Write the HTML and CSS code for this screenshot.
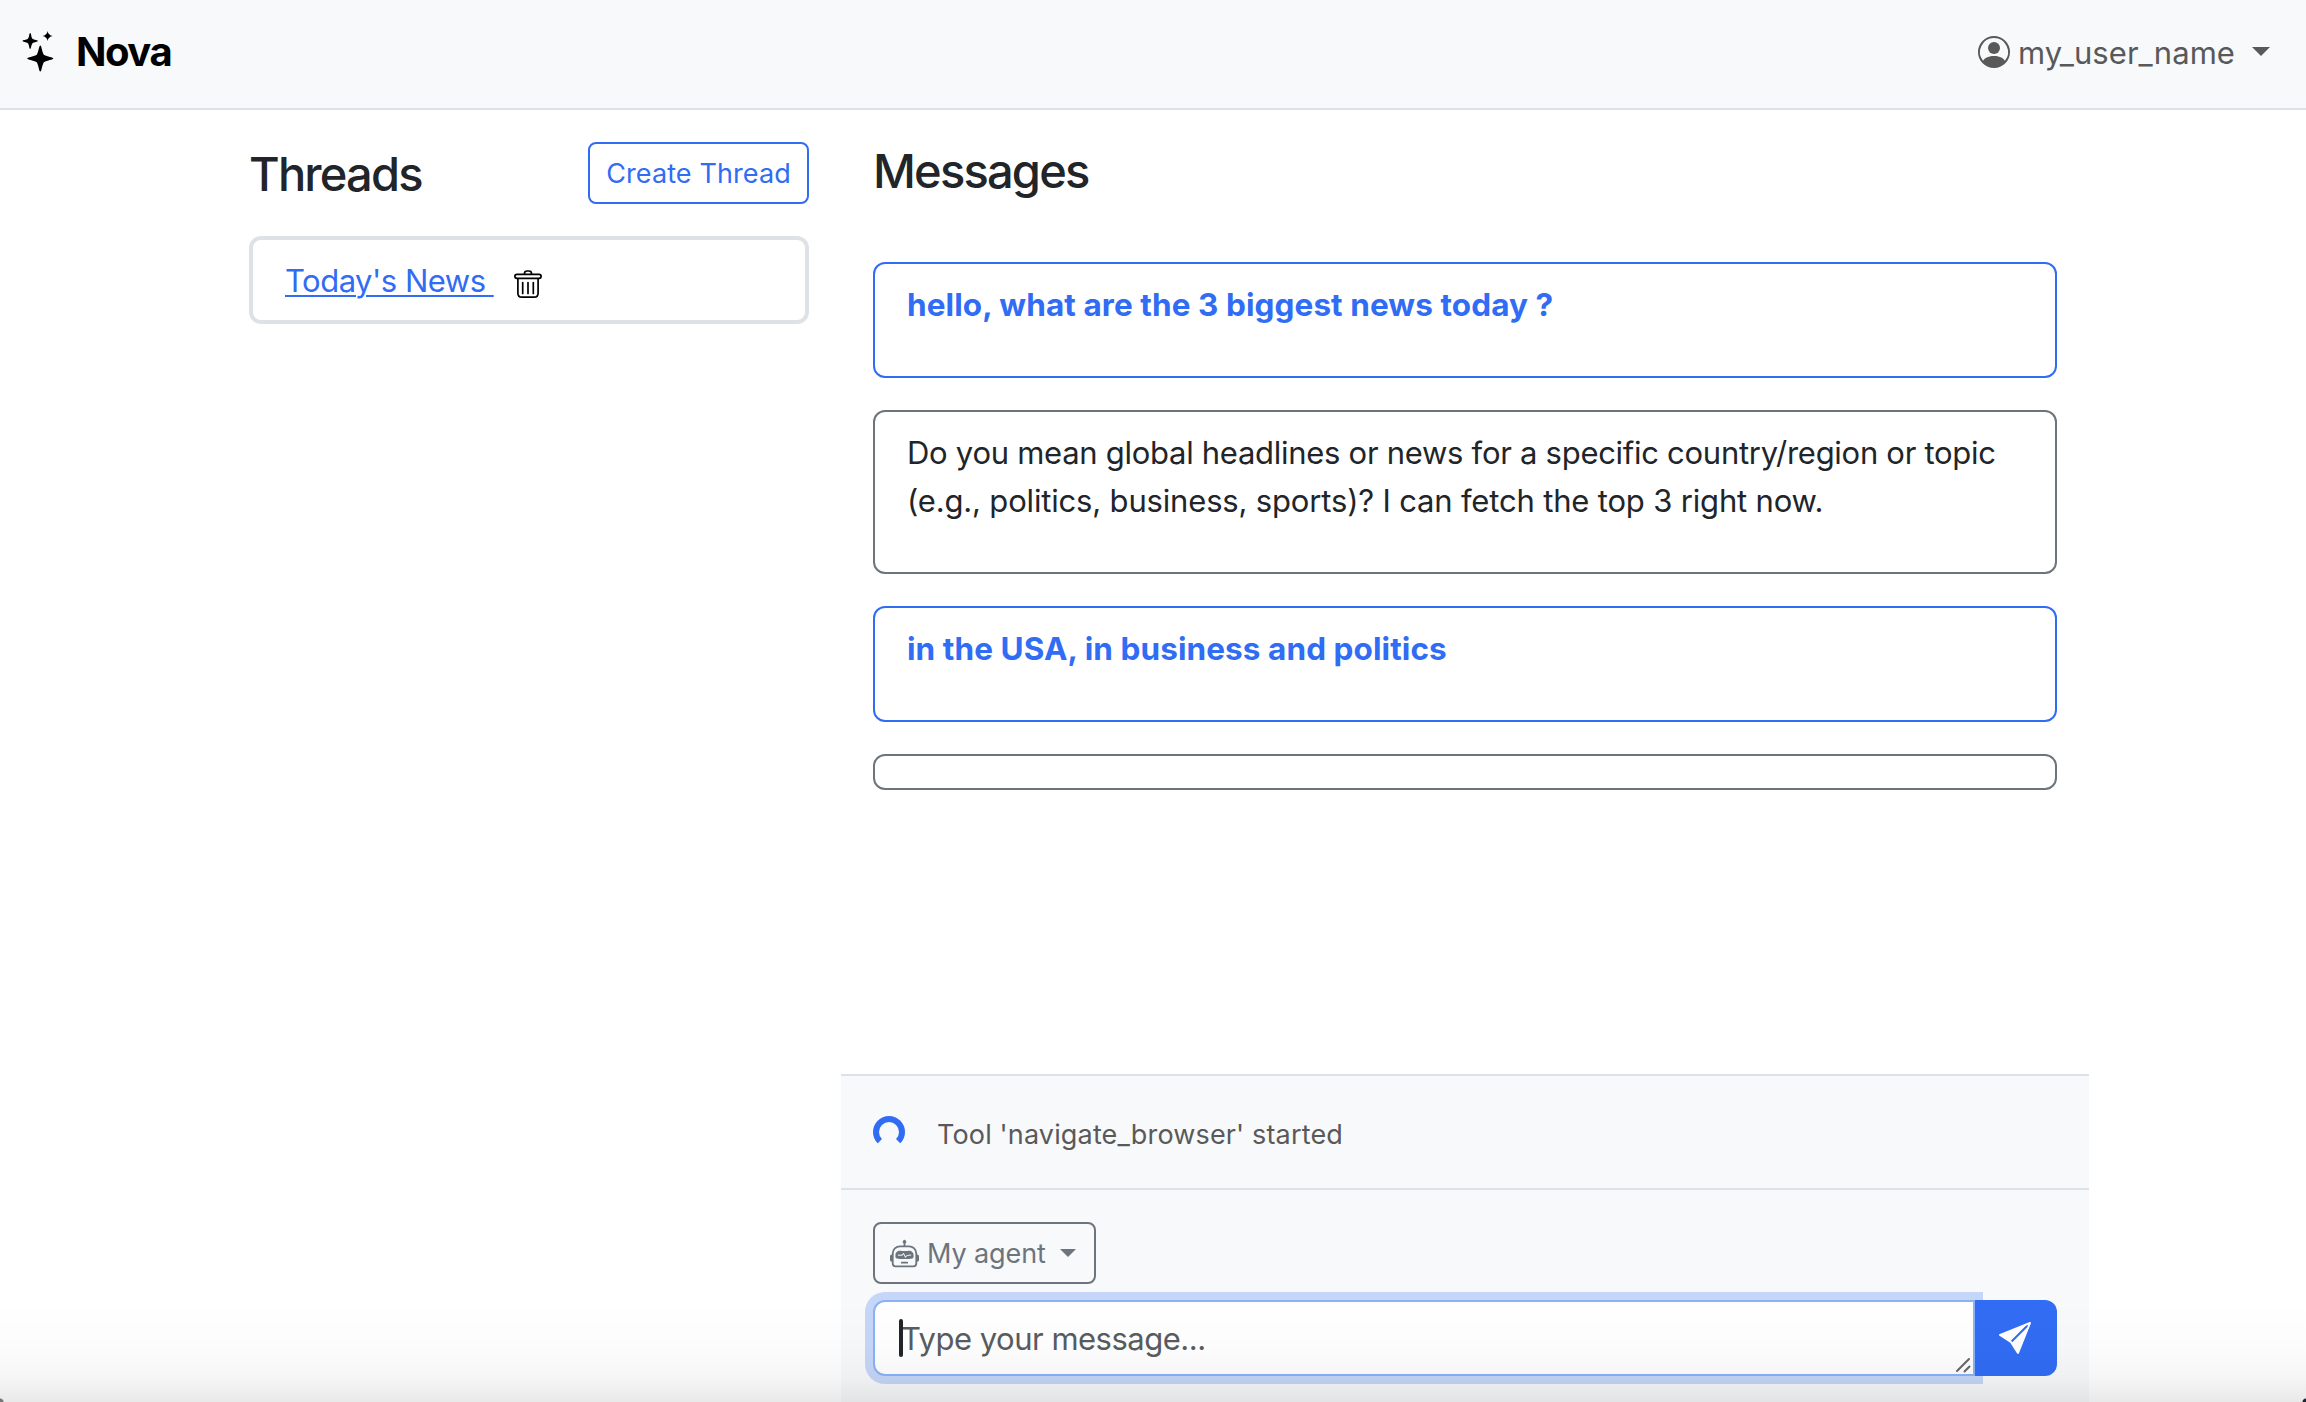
FILE: index.html
```html
<!DOCTYPE html>
<html lang="en">
<head>
<meta charset="utf-8">
<title>Nova</title>
<link rel="stylesheet" href="styles.css">
</head>
<body>
<nav class="navbar">
  <a class="brand">
    <svg class="brand-icon" viewBox="0 0 30 40"><path d="M17.300 14.500C18.600 14.500 18.800 20 20.800 23.800C24.500 26 30.300 26.200 30.300 27.500C30.300 28.800 24.500 29 20.800 31.200C18.800 35 18.600 40.500 17.300 40.500C16 40.500 15.800 35 13.800 31.200C10 29 4.300 28.800 4.300 27.500C4.300 26.200 10 26 13.800 23.800C15.800 20 16 14.500 17.300 14.500ZM7.200 2C8.300 2 8 6 9.500 7.800C11.300 9 14.800 9 14.800 10C14.800 11 11.300 11 9.500 12.200C8 14 8.300 17.800 7.200 17.800C6.100 17.800 6.400 14 4.900 12.200C3.100 11 -.4 11 -.4 10C-.4 9 3.100 9 4.900 7.800C6.400 6 6.100 2 7.200 2ZM24.600 0Q25.200 4.200 29.800 5Q25.200 5.800 24.600 10Q24 5.800 19.400 5Q24 4.200 24.600 0Z"/></svg>
    <span class="brand-name">Nova</span>
  </a>
  <div class="user">
    <svg class="user-icon" viewBox="0 0 16 16"><path d="M11 6a3 3 0 1 1-6 0 3 3 0 0 1 6 0"/><path fill-rule="evenodd" d="M0 8a8 8 0 1 1 16 0A8 8 0 0 1 0 8m8-7a7 7 0 0 0-5.468 11.370C3.242 11.226 4.805 10 8 10s4.757 1.225 5.468 2.370A7 7 0 0 0 8 1"/></svg>
    <span class="user-name">my_user_name</span>
    <span class="caret"></span>
  </div>
</nav>
<div class="container">
  <aside class="threads">
    <header class="threads-head">
      <h2>Threads</h2>
      <button class="btn-create">Create Thread</button>
    </header>
    <div class="thread">
      <a class="thread-link">Today's News </a>
      <svg class="trash" viewBox="0 0 28 32" fill="none" stroke="#000" stroke-width="1.700" stroke-linecap="round"><rect x=".9" y="4.300" width="26.200" height="4" rx="2"/><path d="M10.500 4V3.500Q10.500 1 13 1H15Q17.500 1 17.500 3.500V4M3.900 9V23.200Q3.900 27.200 7.900 27.200H20.100Q24.100 27.200 24.100 23.200V9M8.700 12.500V23.500M14 12.500V23.500M19.300 12.500V23.500"/></svg>
    </div>
  </aside>
  <main class="chat">
    <section class="messages">
      <h2>Messages</h2>
      <article class="card user-card"><span class="line">hello, what are the 3 biggest news today ?</span></article>
      <article class="card"><span class="line tight">Do you mean global headlines or news for a specific country/region or topic</span><span class="line snug">(e.g., politics, business, sports)? I can fetch the top 3 right now.</span></article>
      <article class="card user-card"><span class="line">in the USA, in business and politics</span></article>
      <article class="card empty"></article>
    </section>
    <section class="status">
      <span class="spinner"></span>
      <span class="status-text">Tool 'navigate_browser' started</span>
    </section>
    <form class="composer">
      <div class="agent">
        <svg class="robot" viewBox="0 0 16 16"><path d="M6 12.500a.5.5 0 0 1 .5-.5h3a.5.5 0 0 1 0 1h-3a.5.5 0 0 1-.5-.5M3 8.062C3 6.760 4.235 5.765 5.530 5.886a26.600 26.600 0 0 0 4.940 0C11.765 5.765 13 6.760 13 8.062v1.157a.930.930 0 0 1-.765.935c-.845.147-2.340.346-4.235.346s-3.390-.2-4.235-.346A.930.930 0 0 1 3 9.219zm4.542-.827a.250.250 0 0 0-.217.068l-.920.9a25 25 0 0 1-1.871-.183.250.250 0 0 0-.068.495c.550.076 1.232.149 2.020.193a.250.250 0 0 0 .189-.071l.754-.736.847 1.710a.250.250 0 0 0 .404.062l.932-.970a25 25 0 0 0 1.922-.188.250.250 0 0 0-.068-.495c-.538.074-1.207.145-1.980.189a.250.250 0 0 0-.166.076l-.754.785-.842-1.700a.250.250 0 0 0-.182-.135"/><path d="M8.500 1.866a1 1 0 1 0-1 0V3h-2A4.500 4.500 0 0 0 1 7.500V8a1 1 0 0 0-1 1v2a1 1 0 0 0 1 1v1a2 2 0 0 0 2 2h10a2 2 0 0 0 2-2v-1a1 1 0 0 0 1-1V9a1 1 0 0 0-1-1v-.5A4.500 4.500 0 0 0 10.500 3h-2zM14 7.500V13a1 1 0 0 1-1 1H3a1 1 0 0 1-1-1V7.500A3.500 3.500 0 0 1 5.500 4h5A3.500 3.500 0 0 1 14 7.500"/></svg>
        <span class="agent-name">My agent</span>
        <span class="caret small"></span>
      </div>
      <div class="input-row">
        <div class="input"><span class="cursor"></span><span class="placeholder">Type your message...</span>
          <svg class="grip" viewBox="0 0 14 14"><path d="M1 13L13 1M8.500 13.500L13.500 8.500"/></svg>
        </div>
        <div class="send"><svg class="send-icon" viewBox="0 0 16 16"><path d="M15.964.686a.5.5 0 0 0-.650-.650L.767 5.855H.766l-.452.180a.5.5 0 0 0-.082.887l.410.260.001.002 4.995 3.178 3.178 4.995.002.002.260.410a.5.5 0 0 0 .886-.083zm-1.833 1.890L6.637 10.070l-.215-.338a.5.5 0 0 0-.154-.154l-.338-.215 7.494-7.494 1.178-.471z"/></svg></div>
      </div>
    </form>
  </main>
</div>
<div class="shade"></div>
</body>
</html>
```
FILE: styles.css
```css
* { box-sizing: border-box; }
body { margin: 0; height: 1402px; overflow: hidden; display: flex; flex-direction: column; background: #fff; color: #212529; font: 400 31px/48px Inter, "Liberation Sans", sans-serif; position: relative; }
svg { display: block; flex: none; overflow: visible; }
span { white-space: nowrap; }
.navbar { height: 110px; flex: none; background: #f8f9fb; border-bottom: 2px solid #dee2e6; display: flex; justify-content: space-between; padding: 0 36px 0 23px; }
.brand { display: flex; align-items: flex-start; padding-top: 31px; }
.brand-icon { width: 30px; height: 40px; margin-right: 23px; }
.brand-name { font-size: 40px; line-height: 42px; font-weight: 700; color: #000; letter-spacing: -1.5px; }
.user { display: flex; align-items: flex-start; padding-top: 28px; color: #595959; }
.user-icon { width: 32px; height: 32px; margin: 8px 8px 0 0; fill: #595959; }
.user-name { padding-top: 1px; width: 218px; letter-spacing: .05px; }
.caret { border: 9px solid transparent; border-top-color: currentColor; border-bottom: 0; margin: 19px 0 0 16px; }
.caret.small { border-width: 8px 8px 0; margin: 25px 0 0 14px; }
.container { width: 1872px; margin: 0 0 0 217px; flex: 1; display: grid; grid-template-columns: 624px 1248px; }
h2 { margin: 0; font-size: 47px; line-height: 58px; font-weight: 500; letter-spacing: -1.8px; }
.threads { padding: 32px 32px 0; }
.threads-head { display: flex; justify-content: space-between; height: 62px; }
.threads-head h2 { padding-top: 3px; }
.btn-create { width: 221px; height: 62px; padding: 1px 0 0; border: 2px solid #316cf4; border-radius: 8px; background: #fff; color: #316cf4; font: 400 27px/58px Inter, sans-serif; letter-spacing: .1px; white-space: nowrap; }
.thread { margin-top: 32px; height: 88px; border: 4px solid #dee2e6; border-radius: 12px; display: flex; padding: 17px 0 0 32px; }
.thread-link { width: 208px; color: #316cf4; letter-spacing: -.5px; text-decoration: underline; text-decoration-thickness: 2px; text-underline-offset: 3px; white-space: pre; }
.trash { width: 28px; height: 32px; margin: 13px 0 0 21px; }
.chat { display: flex; flex-direction: column; }
.messages { flex: none; height: 964px; padding: 32px 32px 0; display: flex; flex-direction: column; gap: 32px; }
.messages h2 { height: 88px; }
.card { border: 2px solid #6c757d; border-radius: 12px; padding: 17px 32px 47px; flex: none; min-height: 36px; }
.line { display: block; }
.tight { letter-spacing: -.28px; }
.snug { letter-spacing: -.17px; }
.user-card { border-color: #316cf4; color: #316cf4; font-weight: 700; font-size: 31.5px; letter-spacing: .08px; }
.card.empty { padding: 0; }
.status { height: 116px; flex: none; background: #f8f9fb; border-top: 2px solid #dee2e6; border-bottom: 2px solid #dee2e6; display: flex; padding: 40px 32px 0; }
.spinner { width: 32px; height: 32px; border: 6px solid #316cf4; border-bottom-color: transparent; border-radius: 50%; margin-right: 32px; }
.status-text { font-size: 27px; line-height: 37px; color: #595959; letter-spacing: .15px; }
.composer { flex: 1; background: #f8f9fb; padding: 32px 32px 0; }
.agent { width: 223px; height: 62px; border: 2px solid #6c757d; border-radius: 8px; color: #6c757d; display: flex; padding-left: 15px; }
.robot { width: 29px; height: 29px; fill: #6c757d; margin: 16px 8px 0 0; }
.agent-name { font-size: 27px; line-height: 60px; width: 119px; letter-spacing: -.1px; }
.input-row { display: flex; height: 76px; margin-top: 16px; }
.input { flex: 1; background: #fff; border: 2px solid #8ab3f5; border-radius: 12px 0 0 12px; box-shadow: 0 0 0 8px #c6d6f8; color: #595c5f; letter-spacing: -.5px; padding: 13px 0 0 26px; position: relative; }
.cursor { position: absolute; left: 24px; top: 17px; width: 4px; height: 38px; border-radius: 2px; background: #212529; }
.grip { position: absolute; right: 3px; bottom: 2px; width: 14px; height: 14px; fill: none; stroke: #666; stroke-width: 2; stroke-linecap: round; }
.send { width: 82px; position: relative; background: #316cf4; border-radius: 0 12px 12px 0; padding: 22px 0 0 24px; }
.send-icon { width: 32px; height: 32px; fill: #fff; }
.shade { position: absolute; left: 0; right: 0; bottom: 0; height: 102px; background: radial-gradient(circle at 0 100%, #777 3px, transparent 4px), radial-gradient(circle at 100% 100%, #1d2433 3px, transparent 4px), linear-gradient(rgba(0,0,0,0), rgba(0,0,0,.012) 45%, rgba(0,0,0,.035) 75%, rgba(0,0,0,.085)); }
```
